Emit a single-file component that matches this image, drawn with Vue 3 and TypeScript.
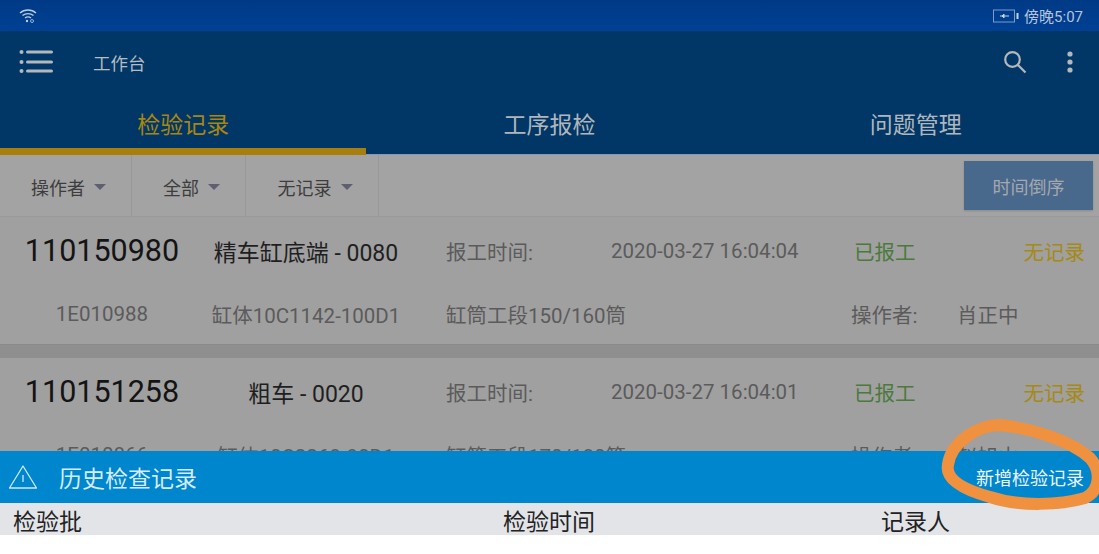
<script setup lang="ts">
interface Rec {
  no: string
  proc: string
  time: string
  code: string
  part: string
  section: string
  who: string
}

const tabs = ['检验记录', '工序报检', '问题管理']
const filters = ['操作者', '全部', '无记录']
const records: Rec[] = [
  { no: '110150980', proc: '精车缸底端 - 0080', time: '2020-03-27 16:04:04', code: '1E010988', part: '缸体10C1142-100D1', section: '缸筒工段150/160筒', who: '肖正中' },
  { no: '110151258', proc: '粗车 - 0020', time: '2020-03-27 16:04:01', code: '1E010866', part: '缸体10C2268-90D1', section: '缸筒工段170/180筒', who: '赵旭山' },
]
</script>

<template>
  <div class="page">
    <div class="status">
      <svg width="18" height="16" viewBox="0 0 18 16" fill="none" stroke="#b9cbe6" stroke-width="1.400">
        <path d="M1 5c4.500-4 11.500-4 16 0" />
        <path d="M3.500 7.500c3-2.500 8-2.500 11 0" />
        <path d="M6 10c1.700-1.300 4.300-1.300 6 0" />
        <circle cx="8" cy="13" r="1.200" fill="#b9cbe6" stroke="none" />
        <circle cx="13" cy="13" r="1.500" stroke-width="0.800" />
      </svg>
      <div class="clock">
        <svg width="26" height="14" viewBox="0 0 26 14">
          <rect x="0.500" y="1" width="21" height="12" fill="none" stroke="#7f9cc8" />
          <path d="M7 7h9M11 5l-2 2 2 2z" stroke="#c4d2e8" fill="#c4d2e8" />
          <rect x="23.500" y="4" width="2" height="6" fill="#c4d2e8" />
        </svg>
        <span>傍晚5:07</span>
      </div>
    </div>

    <div class="toolbar">
      <svg class="menu" width="36" height="24" viewBox="0 0 36 24" fill="#b4b8bc">
        <circle cx="2.500" cy="2" r="2" />
        <circle cx="2.500" cy="12" r="2" />
        <circle cx="2.500" cy="21" r="2" />
        <rect x="7" y="0.500" width="27" height="3" rx="1.500" />
        <rect x="7" y="10.500" width="27" height="3" rx="1.500" />
        <rect x="7" y="19.500" width="27" height="3" rx="1.500" />
      </svg>
      <span class="title">工作台</span>
      <svg width="24" height="24" viewBox="0 0 24 24" fill="none" stroke="#b4b8bc" stroke-width="2.200">
        <circle cx="9.500" cy="9.500" r="7.300" />
        <path d="M14.700 14.700l7.800 7.800" />
      </svg>
      <svg class="more" width="8" height="22" viewBox="0 0 8 22" fill="#b4b8bc">
        <circle cx="4" cy="3" r="2.600" />
        <circle cx="4" cy="11" r="2.600" />
        <circle cx="4" cy="19" r="2.600" />
      </svg>
    </div>

    <div class="tabs">
      <div v-for="(t, i) in tabs" :key="t" class="tab" :class="{ on: i === 0 }">{{ t }}</div>
    </div>

    <div class="filters">
      <div v-for="f in filters" :key="f" class="filter">
        <span>{{ f }}</span><i class="caret"></i>
      </div>
      <button class="sort">时间倒序</button>
    </div>

    <div class="list">
      <div v-for="r in records" :key="r.no" class="rec">
        <div class="line">
          <span class="no">{{ r.no }}</span>
          <span class="proc">{{ r.proc }}</span>
          <span class="label">报工时间:</span>
          <span class="time">{{ r.time }}</span>
          <span class="done">已报工</span>
          <span class="none">无记录</span>
        </div>
        <div class="line second">
          <span class="code">{{ r.code }}</span>
          <span class="part">{{ r.part }}</span>
          <span class="section">{{ r.section }}</span>
          <span class="op">操作者:</span>
          <span class="who">{{ r.who }}</span>
        </div>
      </div>
    </div>

    <div class="history">
      <svg width="30" height="26" viewBox="0 0 30 26" fill="none" stroke="#cfe8f7" stroke-width="1.300" stroke-linejoin="round">
        <path d="M15 2L28.500 24H1.500z" />
        <path d="M15 11v7" />
      </svg>
      <span class="h-title">历史检查记录</span>
      <span class="h-add">新增检验记录</span>
    </div>

    <div class="thead">
      <span class="th1">检验批</span>
      <span class="th2">检验时间</span>
      <span class="th3">记录人</span>
    </div>
    <div class="rest"></div>

    <!-- hand drawn circle on the screenshot -->
    <svg class="scribble" width="1099" height="554" viewBox="0 0 1099 554" fill="none">
      <path d="M1000 425C1030 428 1070 440 1090 458C1101 470 1101 490 1085 498C1060 505 1020 507 990 497C965 490 945 480 948 465C950 445 975 425 1000 425Z" stroke="#f0913f" stroke-width="12" stroke-linecap="round" />
    </svg>
  </div>
</template>

<style scoped>
.page {
  position: relative;
  width: 1099px;
  height: 554px;
  overflow: hidden;
  display: flex;
  flex-direction: column;
  background: #fff;
  font-family: Roboto, "Noto Sans CJK SC", sans-serif;
}

.status {
  height: 31px;
  flex: none;
  display: flex;
  align-items: center;
  justify-content: space-between;
  padding: 0 16px 0 19px;
  background: linear-gradient(#003a85, #004094);
  color: #b4c4de;
  font-size: 15px;
}
.clock {
  display: flex;
  align-items: center;
  gap: 5px;
}

.toolbar {
  height: 66px;
  flex: none;
  display: flex;
  align-items: center;
  background: #013766;
  padding: 0 25px 4px 19px;
  box-sizing: border-box;
}
.menu {
  margin-right: 38px;
}
.title {
  color: #b7bcc1;
  font-size: 17.500px;
  flex: 1;
}
.more {
  margin-left: 39px;
}

.tabs {
  height: 58px;
  flex: none;
  display: grid;
  grid-template-columns: repeat(3, 1fr);
  background: #013766;
  border-bottom: 1px solid #7f9bb5;
  box-sizing: border-box;
}
.tab {
  display: flex;
  align-items: center;
  justify-content: center;
  padding-bottom: 6px;
  font-size: 23px;
  color: #b0b6bc;
  height: 58px;
  box-sizing: border-box;
}
.tab.on {
  color: #a8860f;
  border-bottom: 7px solid #a87f0c;
  padding-bottom: 0;
}

.filters {
  height: 62px;
  flex: none;
  display: flex;
  align-items: center;
  background: #a3a3a3;
  border-bottom: 1px solid #9a9a9a;
  box-sizing: border-box;
  padding-right: 6px;
}
.filter {
  height: 100%;
  display: flex;
  align-items: center;
  justify-content: center;
  gap: 9px;
  padding: 2px 0 0 6px;
  color: #3d3d3d;
  font-size: 18px;
  border-right: 1px solid #999;
  box-sizing: border-box;
}
.filter:nth-child(1) {
  width: 132px;
}
.filter:nth-child(2) {
  width: 114px;
}
.filter:nth-child(3) {
  width: 133px;
}
.caret {
  width: 0;
  height: 0;
  border: 6px solid transparent;
  border-top: 6px solid #5f5f72;
  border-bottom: 0;
}
.sort {
  margin-left: auto;
  width: 129px;
  height: 49px;
  border: 0;
  background: #48688c;
  color: #a5a9ad;
  font: inherit;
  font-size: 18px;
  box-shadow: 0 1px 2px #8a8a8a;
}

.list {
  flex: 1;
  min-height: 0;
  overflow: hidden;
  background: #8f8f8f;
  display: flex;
  flex-direction: column;
  gap: 13px;
}
.rec {
  flex: none;
  height: 128px;
  background: #a0a0a0;
  box-sizing: border-box;
  border-bottom: 1px solid #8a8a8a;
}
.line {
  display: grid;
  grid-template-columns: 204px 204px 203px 240px 110px 1fr;
  align-items: center;
  height: 67px;
  color: #5b5b5b;
  font-size: 20.500px;
}
.line.second {
  height: 60px;
  grid-template-columns: 204px 204px 443px 106px 1fr;
}
.no {
  color: #141414;
  font-size: 30.500px;
  text-align: center;
}
.proc {
  color: #1f1f1f;
  font-size: 23px;
  text-align: center;
}
.label,
.section {
  margin-left: 38px;
}
.done {
  margin-left: 3px;
  color: #4b7a3c;
}
.none {
  padding-right: 14px;
  text-align: right;
  color: #a58a14;
}
.code,
.part {
  text-align: center;
}

.history {
  height: 52px;
  flex: none;
  display: flex;
  align-items: center;
  background: #0086cd;
  color: #d4ecf9;
  padding: 0 15px 0 8px;
  box-sizing: border-box;
}
.h-title {
  margin-left: 21px;
  font-size: 23px;
  flex: 1;
}
.h-add {
  color: #eef7fc;
  font-size: 18px;
}

.thead {
  height: 32px;
  flex: none;
  display: grid;
  grid-template-columns: 503px 378px 1fr;
  align-items: center;
  background: #e2e4e8;
  color: #222;
  font-size: 23px;
}
.th1 {
  padding-left: 13px;
}
.rest {
  height: 19px;
  flex: none;
  background: #fff;
}

.scribble {
  position: absolute;
  left: 0;
  top: 0;
  pointer-events: none;
}
</style>

<style>
html,
body {
  margin: 0;
  background: #fff;
}
</style>
